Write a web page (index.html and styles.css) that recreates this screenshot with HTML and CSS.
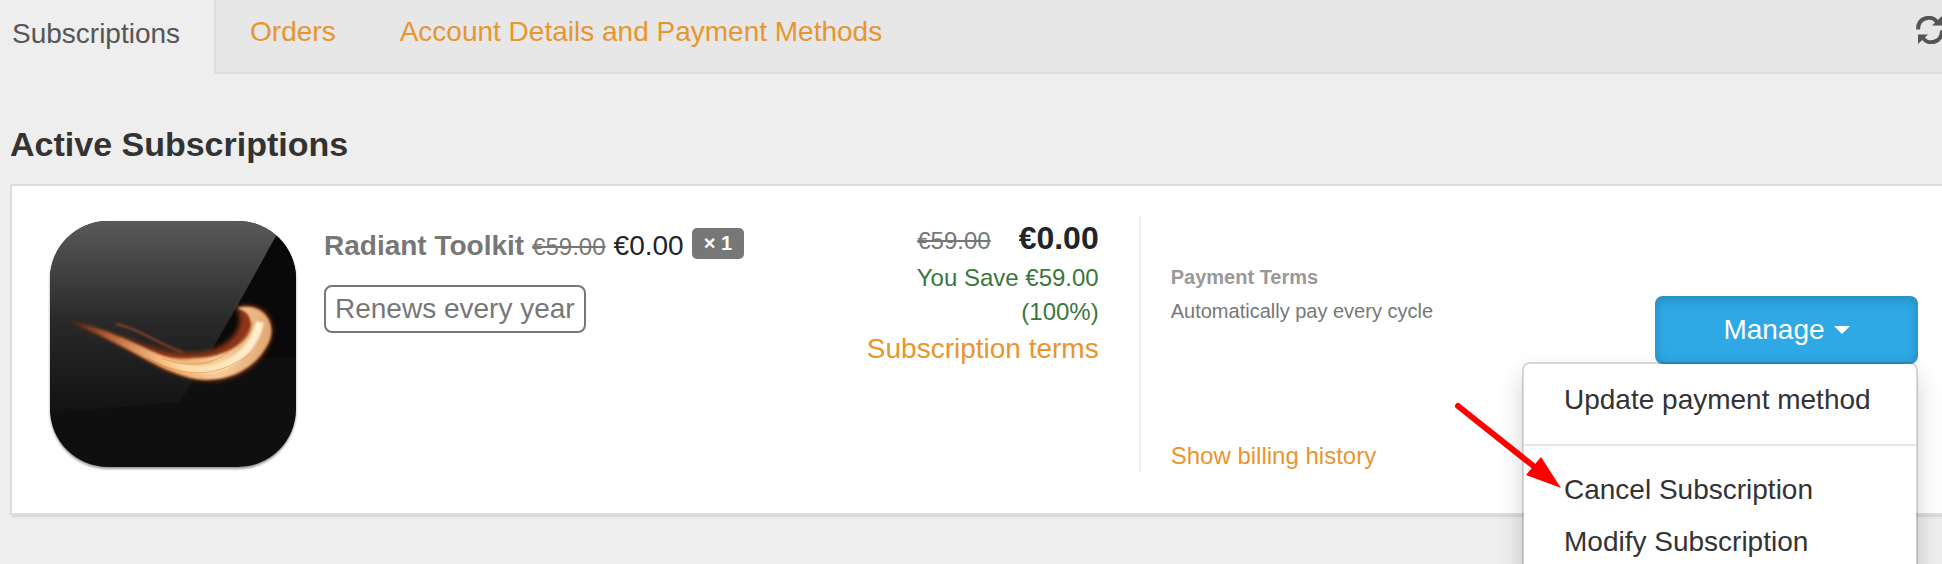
FILE: index.html
```
<!DOCTYPE html>
<html lang="en">
<head>
    <meta charset="UTF-8">
    <meta name="viewport" content="width=device-width, initial-scale=1.0">
    <title>Subscriptions</title>
    <link rel="stylesheet" href="styles.css">
</head>
<body>

    <nav class="tabs">
        <a href="#subscriptions" class="tab active" aria-current="page">Subscriptions</a>
        <div class="tab-bar">
            <a href="#orders" class="tab">Orders</a>
            <a href="#account" class="tab">Account Details and Payment Methods</a>
            <button type="button" class="refresh" aria-label="Refresh">
                <svg viewBox="0 0 28 28" width="28" height="28">
                    <path d="M2 13.5C2 1 16 -1.5 21 6" fill="none" stroke="#555" stroke-width="4"/>
                    <path d="M26 14.5C26 27 12 29.5 7 22" fill="none" stroke="#555" stroke-width="4"/>
                    <path d="M26 0V9.5H16Z M2 28V18.5H12Z" fill="#555"/>
                </svg>
            </button>
        </div>
    </nav>

    <main>
        <h1>Active Subscriptions</h1>

        <section class="card">
            <svg class="product-icon" viewBox="0 0 256 256" role="img" aria-label="Radiant Toolkit">
                <defs>
                    <linearGradient id="gloss" x1="0" y1="0" x2="0" y2="1">
                        <stop offset="0" stop-color="#5c5c5c"/>
                        <stop offset="0.25" stop-color="#444"/>
                        <stop offset="0.55" stop-color="#282828"/>
                        <stop offset="1" stop-color="#121212"/>
                    </linearGradient>
                    <linearGradient id="flame" x1="30" y1="105" x2="230" y2="130" gradientUnits="userSpaceOnUse">
                        <stop offset="0" stop-color="#7a2a12" stop-opacity="0.3"/>
                        <stop offset="0.2" stop-color="#b8663c"/>
                        <stop offset="0.5" stop-color="#eda35f"/>
                        <stop offset="0.75" stop-color="#f5cd98"/>
                        <stop offset="1" stop-color="#e0a570"/>
                    </linearGradient>
                    <linearGradient id="core" x1="70" y1="120" x2="215" y2="120" gradientUnits="userSpaceOnUse">
                        <stop offset="0" stop-color="#f0b07a" stop-opacity="0"/>
                        <stop offset="0.5" stop-color="#ffdca6"/>
                        <stop offset="1" stop-color="#fff0d0"/>
                    </linearGradient>
                    <clipPath id="tile"><rect x="8" y="5" width="246" height="246" rx="58"/></clipPath>
                    <filter id="soft" x="-10%" y="-20%" width="120%" height="140%"><feGaussianBlur stdDeviation="1.2"/></filter>
                    <filter id="glow" x="-10%" y="-20%" width="120%" height="140%"><feGaussianBlur stdDeviation="2.5"/></filter>
                </defs>
                <rect x="8" y="6" width="246" height="247" rx="58" fill="#999" filter="url(#soft)"/>
                <rect x="8" y="5" width="246" height="246" rx="58" fill="#0f0f0f"/>
                <g clip-path="url(#tile)">
                    <path d="M0 0H246L234 20C204 76 171 132 138 186L8 197H0Z" fill="url(#gloss)"/>
                    <path d="M234 20C202 78 176 128 166 142L256 142V0H246Z" fill="#090909"/>
                    <path d="M26 105C60 113 92 126 118 134C130 137 140 137 150 137C184 137 207 112 194 91C222 83 238 106 226 130C210 160 178 169 152 163C112 154 86 128 26 105Z" fill="#8f3412" filter="url(#glow)"/>
                    <path d="M74 108C96 112 116 128 140 136" fill="none" stroke="#8c4526" stroke-width="2" filter="url(#soft)"/>
                    <path d="M26 105C56 109 92 128 116 138C130 143 140 143 152 142C186 142 209 124 209 108C208 99 204 95 195 92C220 85 237 107 226 128C212 155 184 167 154 163C116 156 92 132 26 105Z" fill="url(#flame)" filter="url(#soft)"/>
                    <path d="M76 123C112 142 142 157 168 153C194 149 213 130 218 106" fill="none" stroke="url(#core)" stroke-width="8" filter="url(#soft)"/>
                    <path d="M120 142C148 154 188 152 211 106M104 141C134 159 170 166 208 138" fill="none" stroke="#c9793e" stroke-width="1" opacity="0.5"/>
                </g>
            </svg>

            <div class="info">
                <div class="product-line">
                    <strong class="product-name">Radiant Toolkit</strong>
                    <s class="old-price">€59.00</s>
                    <span class="price">€0.00</span>
                    <span class="badge">× 1</span>
                </div>
                <span class="renewal">Renews every year</span>
            </div>

            <div class="totals">
                <div class="total-line">
                    <s class="old-price">€59.00</s>
                    <strong class="total">€0.00</strong>
                </div>
                <div class="savings">You Save €59.00 (100%)</div>
                <a href="#terms">Subscription terms</a>
            </div>

            <div class="payment">
                <div>
                    <h2>Payment Terms</h2>
                    <p>Automatically pay every cycle</p>
                </div>
                <a href="#history">Show billing history</a>
            </div>

            <div class="actions">
                <div class="dropdown">
                    <button type="button" class="manage" aria-haspopup="true" aria-expanded="true">
                        Manage <span class="caret"></span>
                    </button>
                    <ul class="menu">
                        <li><a href="#update">Update payment method</a></li>
                        <li class="divider"></li>
                        <li><a href="#cancel">Cancel Subscription</a></li>
                        <li><a href="#modify">Modify Subscription</a></li>
                    </ul>
                    <svg class="pointer" viewBox="0 0 108 86" width="108" height="86" aria-hidden="true">
                        <path d="M4 4L82 66" stroke="#f00" stroke-width="6" stroke-linecap="round"/>
                        <path d="M107 86L72 73L87 55Z" fill="#f00"/>
                    </svg>
                </div>
            </div>
        </section>
    </main>

</body>
</html>
```
FILE: styles.css
```
* {
    box-sizing: border-box;
}

body {
    min-height: 100vh;
    margin: 0;
    overflow: hidden;
    background-color: #eee;
    color: #333;
    font-family: "Liberation Sans", Arial, sans-serif;
    font-size: 28px;
    line-height: 40px;
}

a {
    color: #e8952f;
    text-decoration: none;
}

/* Tabs */
.tabs {
    display: flex;
    height: 74px;
}

.tab-bar {
    flex: 1;
    display: flex;
    align-items: flex-start;
    gap: 64px;
    padding: 12px 0 0 34px;
    background-color: #e7e7e7;
    border-left: 2px solid #ddd;
    border-bottom: 2px solid #ddd;
}

.tab.active {
    padding: 14px 34px 0 12px;
    color: #555;
}

.refresh {
    display: flex;
    margin: 4px -2px 0 auto;
    padding: 0;
    border: 0;
    background: none;
    cursor: pointer;
}

/* Subscription card */
main {
    padding: 50px 0 0 10px;
}

h1 {
    margin: 0 0 20px;
    font-size: 34px;
    line-height: 40px;
}

.card {
    display: grid;
    grid-template-columns: 282px 15fr 8fr 11fr 11fr;
    padding: 30px 24px 41px 30px;
    background-color: #fff;
    border: 2px solid #ddd;
    border-right: 0;
    box-shadow: 2px 2px 2px rgba(0, 0, 0, 0.1);
}

.product-icon {
    width: 256px;
    height: 256px;
}

.info {
    padding-top: 10px;
}

.product-line {
    display: flex;
    align-items: baseline;
    gap: 8px;
    margin-bottom: 18px;
}

.product-name {
    color: #777;
}

.old-price {
    color: #777;
    font-size: 24px;
}

.price,
.total {
    color: #212529;
}

.badge {
    align-self: flex-start;
    margin-top: 2px;
    padding: 0 12px;
    border-radius: 5px;
    background-color: #777;
    color: #fff;
    font-size: 20px;
    font-weight: bold;
    line-height: 31px;
}

.renewal {
    display: inline-block;
    padding: 2px 9px;
    border: 2px solid #777;
    border-radius: 8px;
    color: #777;
}

.totals {
    padding-right: 40px;
    text-align: right;
}

.total-line {
    display: flex;
    justify-content: flex-end;
    align-items: baseline;
    gap: 28px;
    padding-top: 2px;
}

.total {
    font-size: 32px;
}

.savings {
    color: #3c763d;
    font-size: 24px;
    line-height: 34px;
}

.payment {
    display: flex;
    flex-direction: column;
    justify-content: space-between;
    padding: 44px 0 0 30px;
    border-left: 2px solid #eee;
    color: #777;
    font-size: 20px;
    line-height: 34px;
}

.payment h2 {
    margin: 0;
    color: #999;
    font-size: 20px;
}

.payment p {
    margin: 0;
}

.payment a {
    font-size: 24px;
    line-height: 32px;
}

/* Manage menu */
.actions {
    display: flex;
    justify-content: flex-end;
    align-items: flex-start;
    padding-top: 80px;
}

.dropdown {
    position: relative;
}

.manage {
    display: flex;
    justify-content: center;
    align-items: center;
    gap: 9px;
    min-width: 263px;
    padding: 14px 24px;
    border: 0;
    border-radius: 8px;
    background-color: #2fa8e6;
    box-shadow: inset 0 3px 12px rgba(0, 0, 0, 0.2);
    color: #fff;
    font: inherit;
    cursor: pointer;
}

.caret {
    border-top: 8px solid #fff;
    border-left: 8px solid transparent;
    border-right: 8px solid transparent;
}

.menu {
    position: absolute;
    top: 66px;
    right: 0;
    width: 396px;
    margin: 0;
    padding: 10px 0;
    border: 2px solid rgba(0, 0, 0, 0.15);
    border-radius: 8px;
    background-color: #fff;
    background-clip: padding-box;
    box-shadow: 0 12px 24px rgba(0, 0, 0, 0.18);
    list-style: none;
}

.menu a {
    display: block;
    padding: 6px 40px;
    color: #333;
}

.divider {
    height: 2px;
    margin: 18px 0;
    background-color: #e5e5e5;
}

.pointer {
    position: absolute;
    top: 106px;
    right: 356px;
}
```
